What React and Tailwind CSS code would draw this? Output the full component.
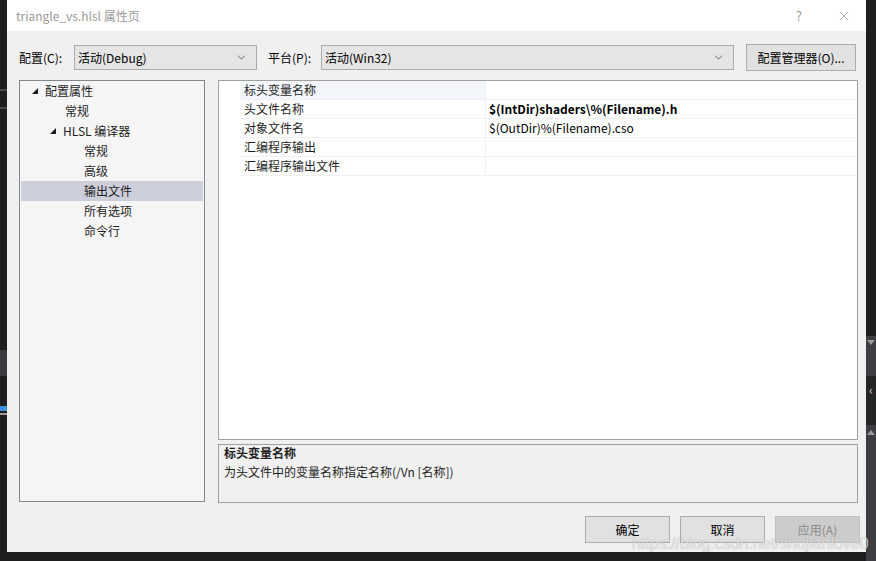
import { ChevronDown, X } from "lucide-react";

const font = "font-['Noto_Sans_CJK_SC',sans-serif]";

// small filled tree expander, pointing down-right
const Expander = () => (
  <svg width="6" height="6" viewBox="0 0 6 6" className="shrink-0">
    <polygon points="6,0 6,6 0,6" fill="#1e1e1e" />
  </svg>
);

const treeItems = [
  { label: "配置属性", indent: 11, expander: true },
  { label: "常规", indent: 44 },
  { label: "HLSL 编译器", indent: 29, expander: true },
  { label: "常规", indent: 63 },
  { label: "高级", indent: 63 },
  { label: "输出文件", indent: 63, selected: true },
  { label: "所有选项", indent: 63 },
  { label: "命令行", indent: 63 },
];

const props = [
  { name: "标头变量名称", value: "", active: true },
  { name: "头文件名称", value: "$(IntDir)shaders\\%(Filename).h", bold: true },
  { name: "对象文件名", value: "$(OutDir)%(Filename).cso" },
  { name: "汇编程序输出", value: "" },
  { name: "汇编程序输出文件", value: "" },
];

const Combo = ({ text, width }) => (
  <div
    className={`h-[25px] ${width} bg-[#e5e5e5] border border-[#acacac] flex items-center justify-between pl-[3px] pr-[8px]`}
  >
    <span className="text-[12px] leading-none text-black">{text}</span>
    <ChevronDown size={13} strokeWidth={1.4} color="#444" />
  </div>
);

const Button = ({ children, disabled }) => (
  <button
    className={`w-[85px] h-[27px] border text-[12px] leading-none ${
      disabled
        ? "bg-[#cccccc] border-[#bfbfbf] text-[#8a8a8a]"
        : "bg-[#e1e1e1] border-[#adadad] text-black"
    }`}
  >
    {children}
  </button>
);

export default function App() {
  return (
    <div className={`relative w-[876px] h-[561px] bg-[#1e1e1e] flex overflow-hidden ${font}`}>
      {/* editor behind the dialog, left edge */}
      <div className="w-[7px] flex flex-col">
        <div className="h-[89px]" />
        <div className="h-[2px] bg-[#4a4a4a]" />
        <div className="h-[16px]" />
        <div className="h-[2px] bg-[#4a4a4a]" />
        <div className="h-[241px]" />
        <div className="h-[26px] bg-[#3a3a40]" />
        <div className="h-[30px]" />
        <div className="h-[5px] bg-[#3d8fe0]" />
        <div className="h-[2px] mt-[2px] bg-[#9a9a9a]" />
      </div>

      {/* dialog */}
      <div className="w-[859px] h-[552px] bg-[#f0f0f0] flex flex-col">
        {/* title bar */}
        <div className="h-[31px] bg-white flex items-center pl-[9px] pr-[14px]">
          <span className="text-[12px] leading-none text-[#9a9a9a]">triangle_vs.hlsl 属性页</span>
          <div className="flex-1" />
          <span className="text-[13px] leading-none text-[#9a9a9a] mr-[34px]">?</span>
          <X size={16} strokeWidth={1} color="#8a8a8a" />
        </div>

        {/* configuration / platform row */}
        <div className="flex items-center pl-[12px] mt-[13px] h-[27px]">
          <span className="w-[55px] text-[12px] leading-none text-black">配置(C):</span>
          <Combo text="活动(Debug)" width="w-[183px]" />
          <span className="ml-[11px] w-[53px] text-[12px] leading-none text-black">平台(P):</span>
          <Combo text="活动(Win32)" width="w-[413px]" />
          <button className="ml-[12px] w-[110px] h-[27px] bg-[#e1e1e1] border border-[#adadad] text-[12px] leading-none text-black">
            配置管理器(O)...
          </button>
        </div>

        {/* main area */}
        <div className="flex mt-[9px] pl-[12px] gap-[13px]">
          {/* category tree */}
          <div className="w-[186px] h-[422px] bg-[#f5f5f5] border border-[#828790] p-[1px] pt-0">
            {treeItems.map((it, i) => (
              <div
                key={i}
                className={`h-[20px] flex items-center ${it.selected ? "bg-[#cccedb]" : ""}`}
                style={{ paddingLeft: it.indent }}
              >
                {it.expander && (
                  <span className="w-[13px] flex items-center">
                    <Expander />
                  </span>
                )}
                <span className="text-[12px] leading-none text-[#1e1e1e]">{it.label}</span>
              </div>
            ))}
          </div>

          <div className="flex flex-col gap-[4px]">
            {/* property grid */}
            <div className="w-[640px] h-[360px] bg-white border border-[#a0a0a0] pl-[21px]">
              {props.map((p, i) => (
                <div key={i} className="h-[19px] flex border-b border-[#eef0f3]">
                  <div
                    className={`w-[246px] flex items-center pl-[4px] border-r border-[#eef0f3] ${
                      p.active ? "bg-[#f2f5fa]" : ""
                    }`}
                  >
                    <span className="text-[12px] leading-none text-[#1e1e1e]">{p.name}</span>
                  </div>
                  <div className="flex-1 flex items-center pl-[3px]">
                    <span
                      className={`text-[12px] leading-none text-black ${p.bold ? "font-bold" : ""}`}
                    >
                      {p.value}
                    </span>
                  </div>
                </div>
              ))}
            </div>

            {/* description */}
            <div className="w-[640px] h-[59px] bg-[#f0f0f0] border border-[#a0a0a0] px-[5px] pt-0 flex flex-col gap-[4px]">
              <span className="text-[12px] leading-[15px] font-bold text-[#1e1e1e]">标头变量名称</span>
              <span className="text-[12px] leading-[15px] text-[#1e1e1e]">为头文件中的变量名称指定名称(/Vn [名称])</span>
            </div>
          </div>
        </div>

        {/* dialog buttons */}
        <div className="flex justify-end items-center gap-[10px] pr-[6px] mt-[13px]">
          <Button>确定</Button>
          <Button>取消</Button>
          <Button disabled>应用(A)</Button>
        </div>
      </div>

      {/* editor behind the dialog, right edge */}
      <div className="flex-1 flex flex-col">
        <div className="h-[336px]" />
        <div className="h-[40px] bg-[#3e3e42] flex justify-center pt-[4px]">
          <svg width="8" height="5" viewBox="0 0 8 5">
            <polygon points="0,0 8,0 4,5" fill="#9a9a9a" />
          </svg>
        </div>
        <div className="h-[49px] bg-[#252526] flex justify-center pt-[7px]">
          <span className="text-[13px] leading-none text-[#c8c8c8]">‹</span>
        </div>
        <div className="flex-1 bg-[#3e3e42] flex justify-center pt-[5px]">
          <svg width="8" height="5" viewBox="0 0 8 5">
            <polygon points="0,5 8,5 4,0" fill="#9a9a9a" />
          </svg>
        </div>
      </div>

      {/* blog watermark over the dialog corner */}
      <span className="absolute left-[632px] top-[536px] text-[16px] leading-none text-white/70 font-['Liberation_Sans',sans-serif] [text-shadow:0_0_1px_rgba(0,0,0,0.35)]">
        https://blog.csdn.net/shujianlove0
      </span>
    </div>
  );
}
